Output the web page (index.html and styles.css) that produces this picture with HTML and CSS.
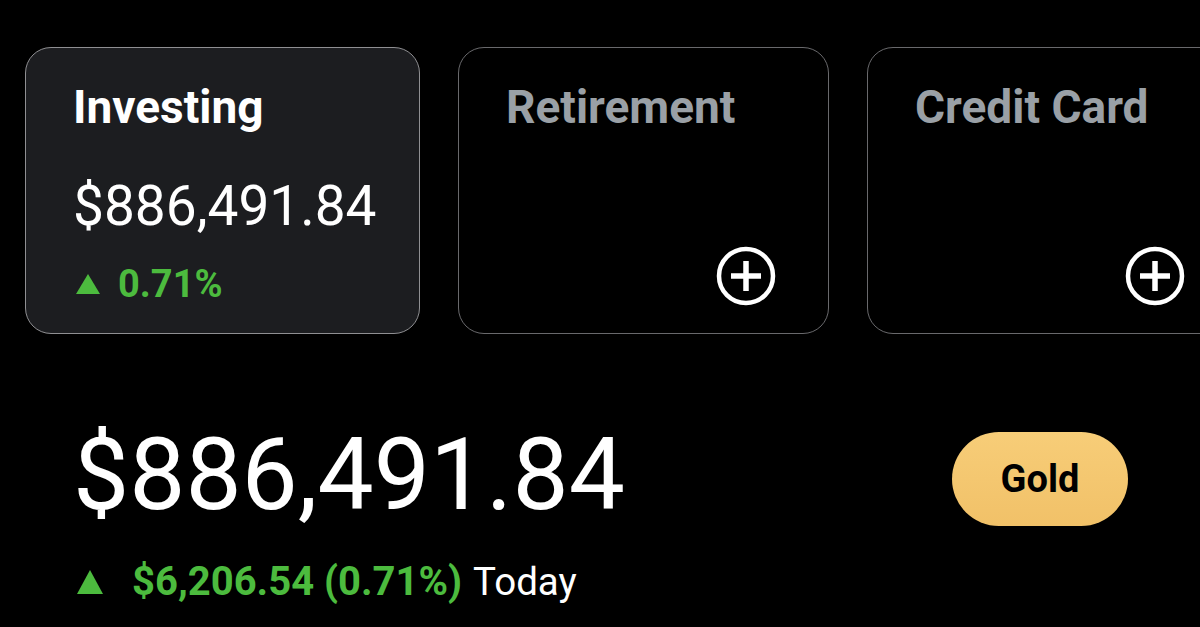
FILE: index.html
```html
<!DOCTYPE html>
<html>
<head>
<meta charset="utf-8">
<link rel="stylesheet" href="styles.css">
</head>
<body>
<div class="page">
  <div class="cards">
    <div class="card active">
      <div class="card-title">Investing</div>
      <div class="card-amount">$886,491.84</div>
      <div class="card-change"><span class="tri"></span><span>0.71%</span></div>
    </div>
    <div class="card">
      <div class="card-title muted">Retirement</div>
      <div class="card-add">
        <svg class="plus" viewBox="0 0 60 60" width="60" height="60"><circle cx="30" cy="30" r="27" fill="none" stroke="#fff" stroke-width="4.5"/><path d="M15 30H45M30 15V45" stroke="#fff" stroke-width="5.5" fill="none"/></svg>
      </div>
    </div>
    <div class="card">
      <div class="card-title muted">Credit Card</div>
      <div class="card-add">
        <svg class="plus" viewBox="0 0 60 60" width="60" height="60"><circle cx="30" cy="30" r="27" fill="none" stroke="#fff" stroke-width="4.5"/><path d="M15 30H45M30 15V45" stroke="#fff" stroke-width="5.5" fill="none"/></svg>
      </div>
    </div>
  </div>
  <div class="summary">
    <div class="summary-main">
      <div class="total">$886,491.84</div>
      <div class="today"><span class="tri big"></span><span class="gain">$6,206.54 (0.71%)</span><span class="today-label">Today</span></div>
    </div>
    <div class="gold">Gold</div>
  </div>
</div>
</body>
</html>
```
FILE: styles.css
```css
* { box-sizing: border-box; }
html, body { margin: 0; padding: 0; background: #000; }
body { font-family: Roboto, "Liberation Sans", sans-serif; color: #fff; width: 1200px; height: 627px; overflow: hidden; }
.page { padding: 47px 0 0 25px; }
.cards { display: flex; gap: 38px; width: 1175px; overflow: hidden; }
.card {
  flex: 0 0 371px;
  height: 287px;
  border: 1.5px solid #69696c;
  border-radius: 26px;
  padding: 34px 0 0 47px;
  display: flex;
  flex-direction: column;
}
.card.active { flex-basis: 395px; background: #1c1d20; border-color: #8f8f92; }
.card-title { font-size: 46px; font-weight: 700; line-height: 50px; white-space: nowrap; }
.card-title.muted { color: #9aa0a6; }
.card-amount { font-size: 55px; line-height: 60px; margin-top: 44px; white-space: nowrap; }
.card-change { display: flex; align-items: center; gap: 18px; margin-top: 26px; margin-left: 3px; color: #4cbb3e; font-weight: 700; font-size: 38px; line-height: 44px; }
.tri { width: 0; height: 0; border-left: 12.5px solid transparent; border-right: 12.5px solid transparent; border-bottom: 20px solid #4cbb3e; }
.card-add { flex: 1; display: flex; justify-content: flex-end; align-items: flex-end; padding: 0 52px 27px 0; }
.plus { display: block; }
.summary { display: flex; justify-content: space-between; align-items: flex-start; padding: 86px 72px 0 48px; }
.total { font-size: 100px; line-height: 110px; white-space: nowrap; }
.today { display: flex; align-items: center; margin-top: 30px; margin-left: 4px; line-height: 44px; }
.tri.big { border-left-width: 13px; border-right-width: 13px; border-bottom-width: 24px; margin-right: 29px; }
.gain { color: #4cbb3e; font-weight: 700; font-size: 40px; }
.today-label { margin-left: 11px; font-size: 38.5px; }
.gold {
  margin-top: 12px;
  width: 176px; height: 94px;
  border-radius: 47px;
  background: linear-gradient(180deg, #f7cd78 0%, #f1c168 100%);
  color: #000; font-weight: 700; font-size: 38px;
  display: flex; align-items: center; justify-content: center;
}
```
